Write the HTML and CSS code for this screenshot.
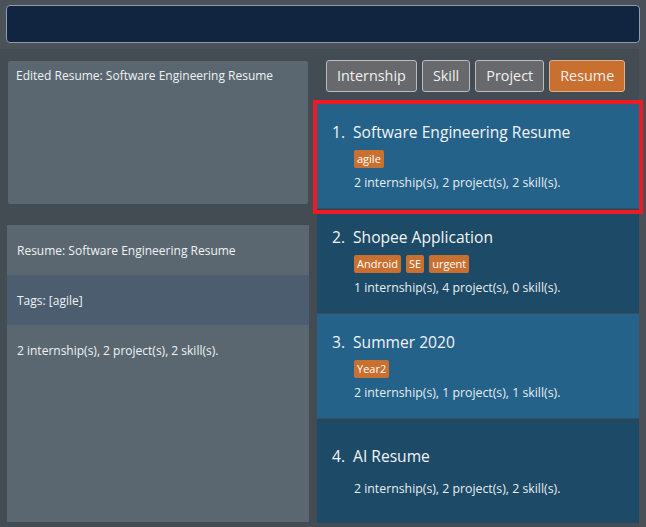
FILE: index.html
```html
<!DOCTYPE html>
<html>
<head>
<meta charset="utf-8">
<link rel="stylesheet" href="styles.css">
</head>
<body>
<div class="top">
  <div class="command"></div>
</div>
<div class="main">
  <div class="left">
    <div class="result">Edited Resume: Software Engineering Resume</div>
    <div class="detail">
      <div class="row">Resume: Software Engineering Resume</div>
      <div class="row alt">Tags: [agile]</div>
      <div class="row grow">2 internship(s), 2 project(s), 2 skill(s).</div>
    </div>
  </div>
  <div class="right">
    <div class="tabs">
      <div class="tab">Internship</div>
      <div class="tab">Skill</div>
      <div class="tab">Project</div>
      <div class="tab active">Resume</div>
    </div>
    <div class="list">
      <div class="card light">
        <div class="title"><span class="num">1.</span>Software Engineering Resume</div>
        <div class="tags"><span class="tag">agile</span></div>
        <div class="info">2 internship(s), 2 project(s), 2 skill(s).</div>
      </div>
      <div class="card dark">
        <div class="title"><span class="num">2.</span>Shopee Application</div>
        <div class="tags"><span class="tag">Android</span><span class="tag">SE</span><span class="tag">urgent</span></div>
        <div class="info">1 internship(s), 4 project(s), 0 skill(s).</div>
      </div>
      <div class="card light">
        <div class="title"><span class="num">3.</span>Summer 2020</div>
        <div class="tags"><span class="tag">Year2</span></div>
        <div class="info">2 internship(s), 1 project(s), 1 skill(s).</div>
      </div>
      <div class="card dark">
        <div class="title"><span class="num">4.</span>AI Resume</div>
        <div class="tags"></div>
        <div class="info">2 internship(s), 2 project(s), 2 skill(s).</div>
      </div>
      <div class="highlight"></div>
    </div>
  </div>
  <div class="scroll"></div>
</div>
</body>
</html>
```

FILE: styles.css
```css
* { box-sizing: border-box; }
html, body {
  margin: 0;
  padding: 0;
  width: 646px;
  height: 527px;
  overflow: hidden;
  background: #434b53;
  font-family: "Open Sans", "Noto Sans", sans-serif;
  color: #ffffff;
}
.top {
  height: 49px;
  padding: 5px 6px 0 6px;
  background: #4a5158;
}
.command {
  height: 38px;
  width: 634px;
  background: #112540;
  border: 1px solid #8e9cab;
  border-radius: 4px;
}
.main {
  display: flex;
  height: 478px;
  background: #434b53;
}
.left {
  width: 309px;
  display: flex;
  flex-direction: column;
  padding-top: 12px;
}
.result {
  margin-left: 8px;
  width: 300px;
  height: 143px;
  background: #5b6770;
  border-radius: 2px;
  padding: 6px 8px;
  font-size: 12px;
  line-height: 17px;
  color: #eef2f5;
}
.detail {
  margin-top: 21px;
  margin-left: 7px;
  width: 302px;
  height: 297px;
  display: flex;
  flex-direction: column;
  background: #5b6770;
}
.row {
  height: 50px;
  padding: 17px 10px 0 10px;
  font-size: 12px;
  line-height: 17px;
  color: #eef2f5;
}
.row.alt { background: #4c5d70; }
.row.grow { flex: 1; }
.right {
  width: 330px;
  margin-left: 8px;
  display: flex;
  flex-direction: column;
}
.tabs {
  display: flex;
  gap: 5px;
  padding: 11px 0 0 9px;
  height: 55px;
}
.tab {
  height: 32px;
  padding: 0 10px;
  border: 1px solid #b8bcc0;
  border-radius: 3px;
  background: #67696c;
  font-size: 14.4px;
  line-height: 30px;
  color: #f0f0f0;
}
.tab.active {
  background: #c96f2f;
  border-color: #e0b090;
}
.list {
  position: relative;
  width: 322px;
  display: flex;
  flex-direction: column;
  gap: 1px;
}
.card {
  height: 104px;
  display: flex;
  flex-direction: column;
  justify-content: center;
  padding-left: 15px;
}
.card.light { background: #24628a; }
.card.dark { background: #1d4a66; }
.title {
  font-size: 15.6px;
  line-height: 20px;
  color: #f2f4f6;
  display: flex;
}
.num { margin-right: 8px; }
.tags {
  display: flex;
  gap: 5px;
  margin: 8px 0 0 22px;
}
.tag {
  background: #c96f2f;
  border-radius: 2px;
  padding: 0 3px;
  font-size: 11px;
  line-height: 18px;
  color: #ffffff;
}
.info {
  margin: 6px 0 0 22px;
  font-size: 12.3px;
  line-height: 17px;
  color: #e8eef3;
}
.highlight {
  position: absolute;
  left: -4px;
  top: -4px;
  width: 330px;
  height: 114px;
  border: 4px solid #ed1c24;
}
.scroll {
  width: 7px;
  background: #4b5056;
}
```
